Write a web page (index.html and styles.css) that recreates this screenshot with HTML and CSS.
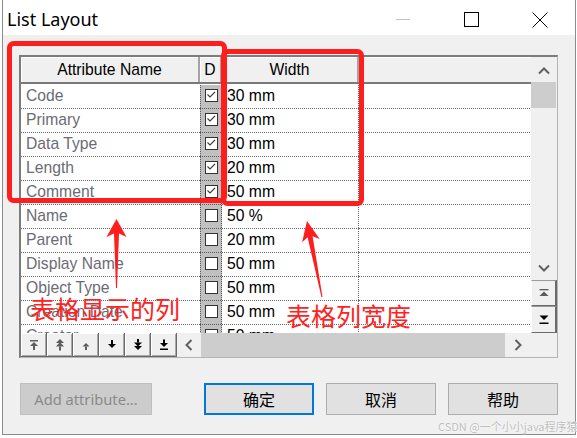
FILE: index.html
```html
<!DOCTYPE html>
<html lang="zh-CN">
<head>
<meta charset="utf-8">
<title>List Layout</title>
<link rel="stylesheet" href="styles.css">
</head>
<body>
<div class="window">
  <div class="titlebar">
    <span class="title">List Layout</span>
    <div class="controls">
      <span class="ctl ctl-min"><svg width="15" height="15" viewBox="0 0 15 15"><line x1="0" y1="7.5" x2="14" y2="7.5"/></svg></span>
      <span class="ctl ctl-max"><svg width="15" height="15" viewBox="0 0 15 15"><rect x="0.5" y="0.5" width="14" height="14"/></svg></span>
      <span class="ctl ctl-close"><svg width="16" height="16" viewBox="0 0 16 16"><path d="M0.5 0.5 L15.5 15.5 M15.5 0.5 L0.5 15.5"/></svg></span>
    </div>
  </div>

  <div class="content">
    <div class="list-frame">
      <div class="grid-head">
        <div class="hcell hc-name">Attribute Name</div>
        <div class="hcell hc-d">D</div>
        <div class="hcell hc-width">Width</div>
        <div class="hcell hc-fill"></div>
      </div>

      <div class="grid-body">
        <div class="row"><div class="cell c-name">Code</div><div class="cell c-d"><span class="check on"><svg viewBox="0 0 11 11"><polyline points="1.5,4.5 4,7 9,2"/></svg></span></div><div class="cell c-width">30 mm</div><div class="cell c-fill"></div></div>
        <div class="row"><div class="cell c-name">Primary</div><div class="cell c-d"><span class="check on"><svg viewBox="0 0 11 11"><polyline points="1.5,4.5 4,7 9,2"/></svg></span></div><div class="cell c-width">30 mm</div><div class="cell c-fill"></div></div>
        <div class="row"><div class="cell c-name">Data Type</div><div class="cell c-d"><span class="check on"><svg viewBox="0 0 11 11"><polyline points="1.5,4.5 4,7 9,2"/></svg></span></div><div class="cell c-width">30 mm</div><div class="cell c-fill"></div></div>
        <div class="row"><div class="cell c-name">Length</div><div class="cell c-d"><span class="check on"><svg viewBox="0 0 11 11"><polyline points="1.5,4.5 4,7 9,2"/></svg></span></div><div class="cell c-width">20 mm</div><div class="cell c-fill"></div></div>
        <div class="row"><div class="cell c-name">Comment</div><div class="cell c-d"><span class="check on"><svg viewBox="0 0 11 11"><polyline points="1.5,4.5 4,7 9,2"/></svg></span></div><div class="cell c-width">50 mm</div><div class="cell c-fill"></div></div>
        <div class="row"><div class="cell c-name">Name</div><div class="cell c-d"><span class="check"></span></div><div class="cell c-width">50 %</div><div class="cell c-fill"></div></div>
        <div class="row"><div class="cell c-name">Parent</div><div class="cell c-d"><span class="check"></span></div><div class="cell c-width">20 mm</div><div class="cell c-fill"></div></div>
        <div class="row"><div class="cell c-name">Display Name</div><div class="cell c-d"><span class="check"></span></div><div class="cell c-width">50 mm</div><div class="cell c-fill"></div></div>
        <div class="row"><div class="cell c-name">Object Type</div><div class="cell c-d"><span class="check"></span></div><div class="cell c-width">50 mm</div><div class="cell c-fill"></div></div>
        <div class="row"><div class="cell c-name">Creation Date</div><div class="cell c-d"><span class="check"></span></div><div class="cell c-width">50 mm</div><div class="cell c-fill"></div></div>
        <div class="row"><div class="cell c-name">Creator</div><div class="cell c-d"><span class="check"></span></div><div class="cell c-width">50 mm</div><div class="cell c-fill"></div></div>
      </div>

      <div class="hbar">
        <div class="movebar">
          <span class="mbtn muted"><svg viewBox="0 0 12 12"><rect x="2" y="1" width="8" height="1.5"/><polygon points="6,3 10,7 2,7"/><rect x="5" y="7" width="2" height="4"/></svg></span>
          <span class="mbtn muted"><svg viewBox="0 0 12 12"><polygon points="6,0 10,4 2,4"/><polygon points="6,3 10,7.5 2,7.5"/><rect x="5" y="7.5" width="2" height="4"/></svg></span>
          <span class="mbtn muted"><svg viewBox="0 0 12 12"><polygon points="6,4 9.5,7.5 2.5,7.5"/><rect x="5" y="7.5" width="2" height="3.5"/></svg></span>
          <span class="mbtn"><svg viewBox="0 0 12 12"><rect x="5" y="1" width="2" height="4"/><polygon points="2,5 10,5 6,9"/></svg></span>
          <span class="mbtn"><svg viewBox="0 0 12 12"><rect x="5" y="0" width="2" height="3.5"/><polygon points="2,3.5 10,3.5 6,7.5"/><polygon points="2,7 10,7 6,11"/></svg></span>
          <span class="mbtn"><svg viewBox="0 0 12 12"><rect x="5" y="0.5" width="2" height="3.5"/><polygon points="2,4 10,4 6,8"/><rect x="2" y="9.5" width="8" height="1.5"/></svg></span>
        </div>
        <div class="harrow"><svg width="8" height="12" viewBox="0 0 8 12"><polyline points="6.5,1 1.5,6 6.5,11"/></svg></div>
        <div class="hthumb"></div>
        <div class="harrow harrow-end"><svg width="8" height="12" viewBox="0 0 8 12"><polyline points="1.5,1 6.5,6 1.5,11"/></svg></div>
      </div>

      <div class="vbar">
        <div class="varrow varrow-up"><svg width="12" height="8" viewBox="0 0 12 8"><polyline points="1,6.5 6,1.5 11,6.5"/></svg></div>
        <div class="vthumb"></div>
        <div class="vtrack"></div>
        <div class="varrow varrow-down"><svg width="12" height="8" viewBox="0 0 12 8"><polyline points="1,1.5 6,6.5 11,1.5"/></svg></div>
        <div class="vbtn muted"><svg width="10" height="8" viewBox="0 0 10 8"><rect x="0.5" y="0" width="9" height="1.3"/><polygon points="5,2.5 9.5,7 0.5,7"/></svg></div>
        <div class="vbtn vbtn-last"><svg width="10" height="10" viewBox="0 0 10 10"><polygon points="0.5,0.5 9.5,0.5 5,5"/><rect x="0.5" y="7.5" width="9" height="1.5"/></svg></div>
        <div class="vcorner"></div>
      </div>
    </div>

    <div class="actions">
      <button class="btn btn-off" disabled>Add attribute...</button>
      <button class="btn btn-default">确定</button>
      <button class="btn">取消</button>
      <button class="btn">帮助</button>
    </div>
  </div>
</div>

<svg class="markup" width="577" height="438" viewBox="0 0 577 438">
  <rect x="9.5" y="43.5" width="215" height="157" rx="4"/>
  <rect x="223.5" y="51.5" width="138" height="152" rx="4"/>
  <polygon class="arrow" points="116.5,219 126.5,237 119,233.5 117,288 116,288 114,233.5 106.5,237"/>
  <polygon class="arrow" points="307,221 319.7,238.9 312.6,236.2 322.5,297 321.5,297.2 307.6,237.2 302.1,242.3"/>
</svg>
<div class="note note-cols">表格显示的列</div>
<div class="note note-width">表格列宽度</div>
<div class="watermark">CSDN @一个小小java程序猿</div>
</body>
</html>
```

FILE: styles.css
```css
* { box-sizing: border-box; }

html, body {
  margin: 0;
  padding: 0;
}

body {
  width: 577px;
  height: 438px;
  overflow: hidden;
  position: relative;
  background: #ffffff;
  font-family: "Liberation Sans", Arial, sans-serif;
}

/* ---------- dialog window ---------- */
.window {
  margin-left: 2px;
  width: 574px;
  height: 435px;
  border: 1px solid #8c8c8c;
  border-top: none;
  display: flex;
  flex-direction: column;
  background: #f0f0f0;
}

.titlebar {
  height: 35px;
  flex: none;
  background: #ffffff;
  display: flex;
  align-items: flex-start;
}

.title {
  font-family: "Noto Sans", "Open Sans", sans-serif;
  font-size: 18px;
  line-height: 24px;
  padding: 7px 0 0 4px;
  color: #000;
}

.controls {
  margin-left: auto;
  display: flex;
}

.ctl {
  height: 35px;
  display: flex;
  justify-content: center;
  align-items: flex-start;
  padding-top: 12px;
}

.ctl svg { display: block; fill: none; stroke-width: 1; }
.ctl-min { width: 70px; }
.ctl-min svg { stroke: #c4c4c4; }
.ctl-max { width: 67px; }
.ctl-max svg { stroke: #000; }
.ctl-close { width: 70px; }
.ctl-close svg { stroke: #000; }

.content {
  flex: 1;
  padding: 20px 0 0 16px;
}

/* ---------- list control ---------- */
.list-frame {
  width: 539px;
  height: 303px;
  border-style: solid;
  border-width: 2px 1px 1px 2px;
  border-color: #7c7c7c #b4b4b4 #b4b4b4 #7c7c7c;
  display: grid;
  grid-template-columns: 510px 26px;
  grid-template-rows: 27px 249px 24px;
  background: #ffffff;
}

.grid-head {
  grid-column: 1;
  grid-row: 1;
  display: grid;
  grid-template-columns: 179px 22px 137px 172px;
  background: #f0f0f0;
  border-bottom: 2px solid #7a7a7a;
}

.hcell {
  display: flex;
  align-items: center;
  justify-content: center;
  font-size: 15.7px;
  color: #000;
  border-right: 2px solid #a3a3a3;
  box-shadow: inset 1px 1px #ffffff;
}

.hc-fill { border-right: none; }

.grid-body {
  grid-column: 1;
  grid-row: 2;
  overflow: hidden;
  padding-top: 1px;
  background: #ffffff;
}

.row {
  display: grid;
  grid-template-columns: 179px 22px 137px 172px;
  height: 24px;
}

.cell {
  font-size: 15.7px;
  line-height: 22px;
  white-space: nowrap;
  overflow: hidden;
  background-image: linear-gradient(to right, #6a6a6a 50%, transparent 50%);
  background-size: 2px 1px;
  background-repeat: repeat-x;
  background-position: left bottom;
}

.c-name {
  padding-left: 5px;
  color: #6b6b74;
}

.c-d {
  display: flex;
  justify-content: center;
  align-items: flex-start;
  padding-top: 4px;
  background:
    linear-gradient(to right, #5a5a5a 50%, transparent 50%) left bottom / 2px 1px repeat-x,
    linear-gradient(to bottom, #5a5a5a 50%, transparent 50%) left top / 1px 2px repeat-y,
    linear-gradient(to bottom, #5a5a5a 50%, transparent 50%) right top / 1px 2px repeat-y,
    #c0c0c0;
}

.c-width {
  padding-left: 5px;
  color: #000;
  background:
    linear-gradient(to right, #6a6a6a 50%, transparent 50%) left bottom / 2px 1px repeat-x,
    linear-gradient(to bottom, #6a6a6a 50%, transparent 50%) right top / 1px 2px repeat-y;
}

.check {
  width: 13px;
  height: 13px;
  border: 1px solid #333333;
  background: #ffffff;
  display: block;
}

.check svg {
  display: block;
  width: 11px;
  height: 11px;
  fill: none;
  stroke: #3c3c3c;
  stroke-width: 1.1;
}

/* ---------- horizontal bar with move buttons ---------- */
.hbar {
  grid-column: 1;
  grid-row: 3;
  display: flex;
  background: #f0f0f0;
}

.movebar { display: flex; }

.mbtn {
  width: 26px;
  height: 24px;
  display: flex;
  align-items: center;
  justify-content: center;
  background: #f0f0f0;
  border-right: 1px solid #6a6a6a;
  border-bottom: 1px solid #6a6a6a;
  box-shadow: inset 1px 1px #ffffff, inset -1px -1px #a8a8a8;
}

.mbtn svg { width: 12px; height: 12px; display: block; fill: #000; }
.mbtn.muted svg { fill: #5c5c5c; }

.harrow {
  width: 24px;
  display: flex;
  align-items: center;
  justify-content: center;
}

.harrow svg, .varrow svg {
  display: block;
  fill: none;
  stroke: #606060;
  stroke-width: 2;
}

.harrow-end { width: 26px; }

.hthumb {
  width: 304px;
  background: #cdcdcd;
}

/* ---------- vertical scroll bar ---------- */
.vbar {
  grid-column: 2;
  grid-row: 1 / 4;
  display: flex;
  flex-direction: column;
  background: #f0f0f0;
}

.varrow {
  display: flex;
  justify-content: center;
  align-items: center;
  flex: none;
}

.varrow-up { height: 25px; padding-top: 3px; }
.varrow-down { height: 24px; }

.vthumb {
  height: 26px;
  flex: none;
  background: #cdcdcd;
  margin-right: 1px;
}

.vtrack { flex: 1; }

.vbtn {
  height: 26px;
  flex: none;
  display: flex;
  justify-content: center;
  align-items: center;
  border-style: solid;
  border-width: 1px 2px 1px 1px;
  border-color: #9a9a9a #6a6a6a #6a6a6a #ffffff;
}

.vbtn svg { display: block; fill: #000; }
.vbtn.muted svg { fill: #5c5c5c; }
.vbtn-last { height: 27px; }

.vcorner { height: 24px; flex: none; }

/* ---------- dialog buttons ---------- */
.actions {
  margin-top: 25px;
  padding-left: 1px;
  display: flex;
  height: 32px;
  gap: 12px;
}

.btn {
  width: 110px;
  height: 32px;
  margin: 0;
  padding: 0;
  font-family: "Noto Sans CJK SC", "Noto Sans", sans-serif;
  font-size: 16px;
  color: #000;
  background: #e1e1e1;
  border: 1px solid #adadad;
  border-radius: 0;
}

.btn-off {
  width: 132px;
  margin-right: 40px;
  font-family: "Noto Sans", "Open Sans", sans-serif;
  font-size: 14.7px;
  color: #8a8a8a;
  background: #cccccc;
  border-color: #bfbfbf;
}

.btn-default {
  border: 2px solid #0078d7;
}

/* ---------- red markup layer ---------- */
.markup {
  position: absolute;
  left: 0;
  top: 0;
  pointer-events: none;
}

.markup rect {
  fill: none;
  stroke: #ff1e1e;
  stroke-width: 5;
}

.markup .arrow { fill: #ff1e1e; }

.note {
  position: absolute;
  font-family: "Noto Sans CJK SC", sans-serif;
  font-size: 25px;
  line-height: 25px;
  color: #ff2222;
  white-space: nowrap;
}

.note-cols { left: 30px; top: 296px; }
.note-width { left: 286px; top: 303px; }

.watermark {
  position: absolute;
  left: 438px;
  top: 419px;
  font-family: "Noto Sans CJK SC", sans-serif;
  font-size: 11px;
  line-height: 14px;
  color: #bdbdbd;
  white-space: nowrap;
  text-shadow: 0 0 2px #ffffff, 0 0 1px #ffffff;
}
```
